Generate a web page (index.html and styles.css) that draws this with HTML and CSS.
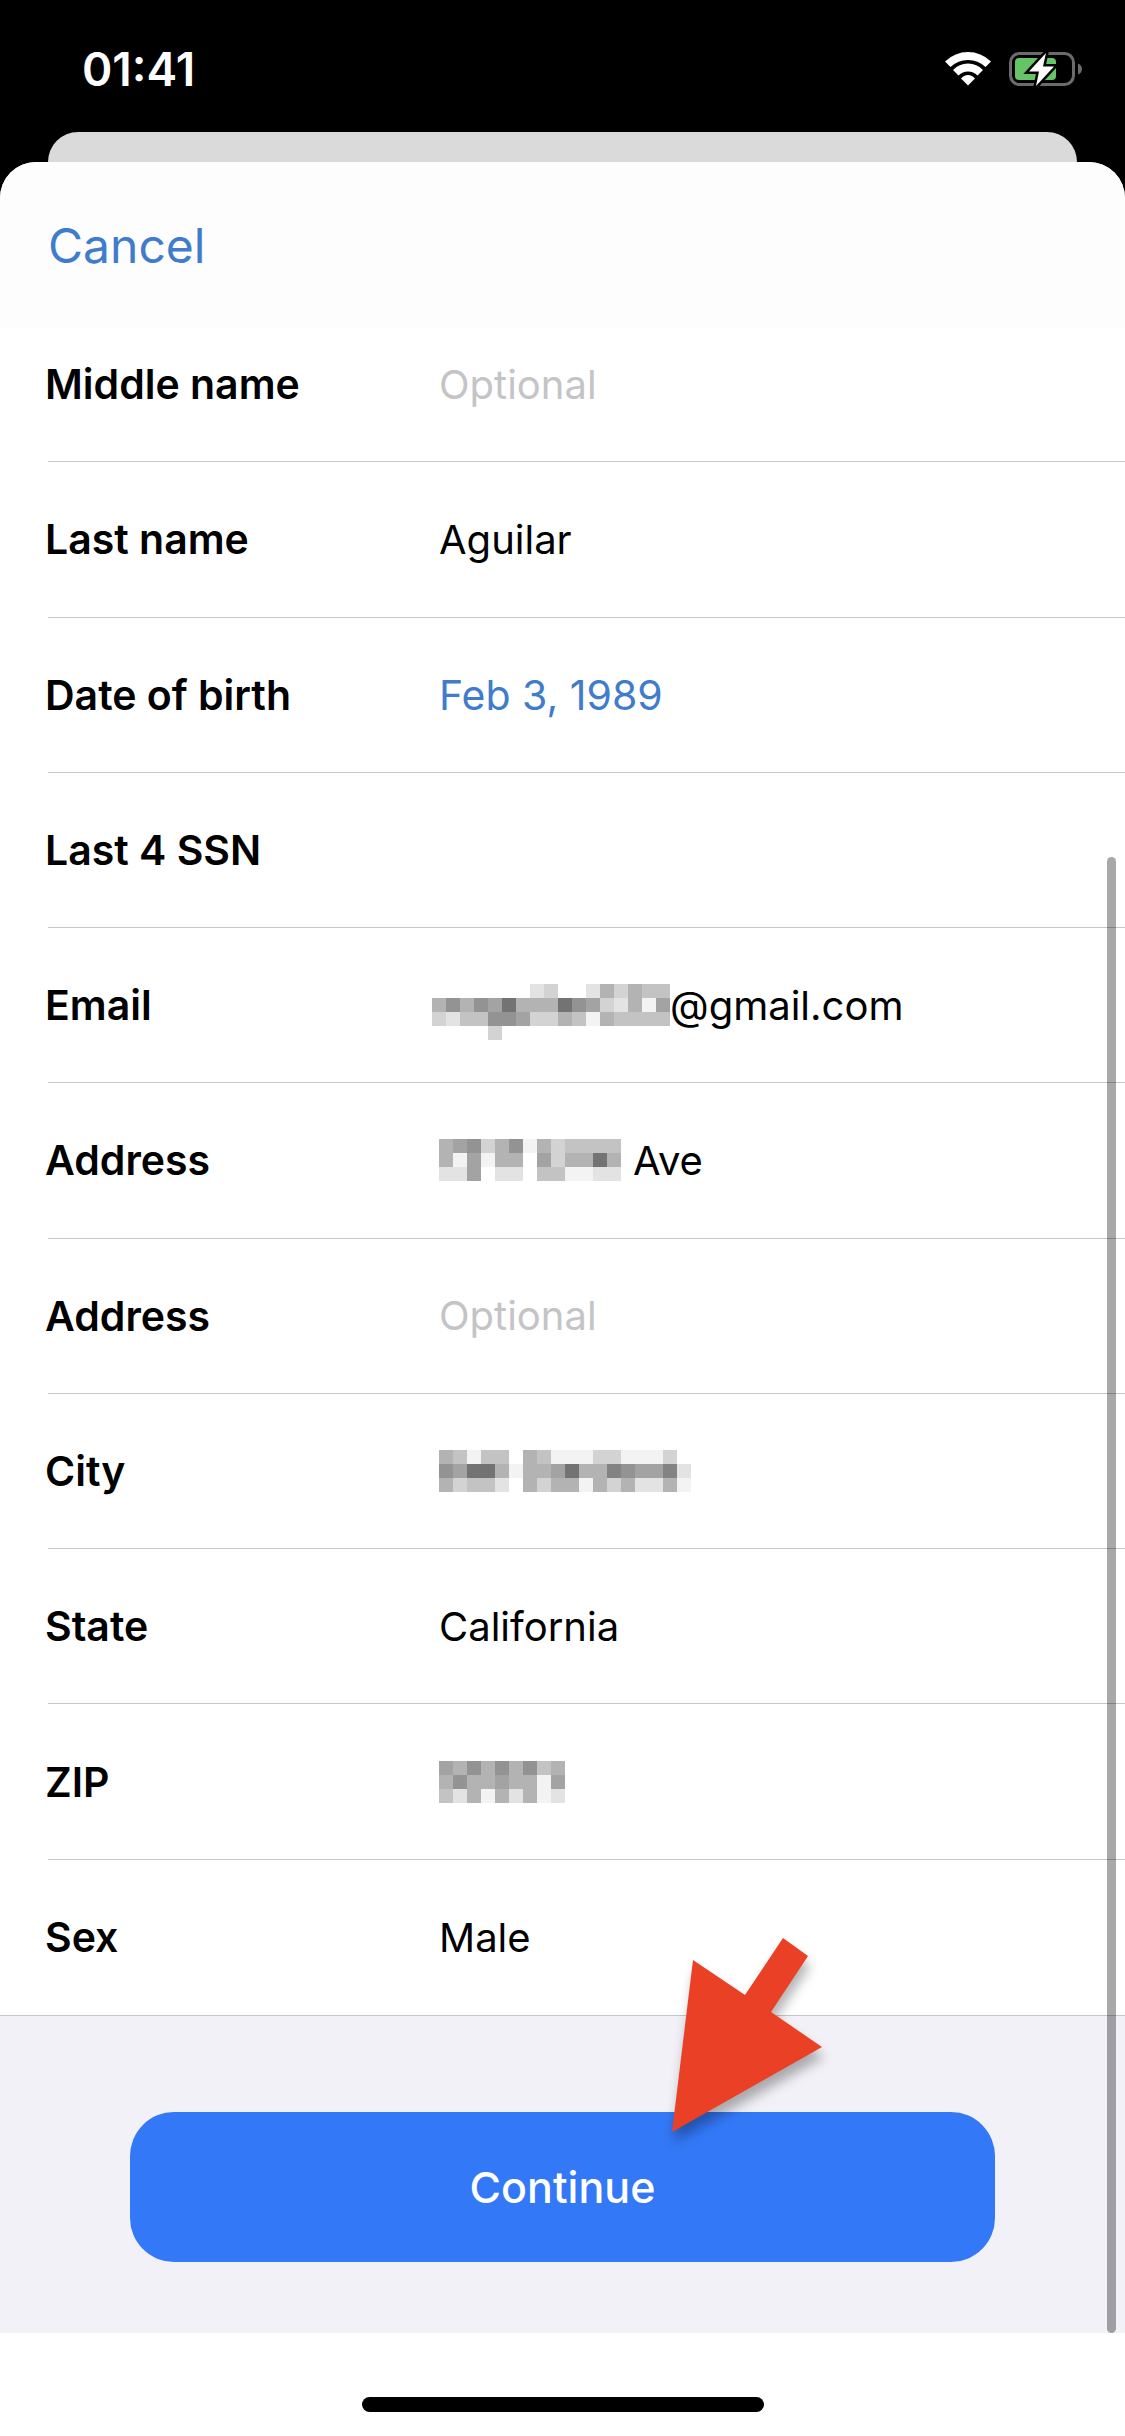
FILE: index.html
```
<!DOCTYPE html>
<html lang="en">
<head>
  <meta charset="UTF-8">
  <meta name="viewport" content="width=device-width, initial-scale=1.0">
  <title>Personal details</title>
  <link rel="stylesheet" href="styles.css">
</head>
<body>
  <div class="status-bar">
    <span class="time">01:41</span>
    <div class="status-icons">
      <svg width="46" height="34" viewBox="0 0 46 34">
        <path d="M0 9.500 Q10 0 23 0 T46 9.500 L40.500 15 Q33 8 23 8 T5.500 15 Z" fill="#fff"/>
        <path d="M8 18 Q14 11.500 23 11.500 T38 18 L32.500 23.500 Q28.500 19.500 23 19.500 T13.500 23.500 Z" fill="#fff"/>
        <path d="M16 26.500 Q19 23 23 23 T30 26.500 L23 33.500 Z" fill="#fff"/>
      </svg>
      <svg width="74" height="38" viewBox="0 0 74 38">
        <rect x="1.500" y="3.500" width="63" height="31" rx="9" fill="none" stroke="#6b6b6d" stroke-width="3"/>
        <path d="M69 13.500 Q73 15 73 19 T69 24.500 Z" fill="#6b6b6d"/>
        <rect x="6" y="8" width="41" height="22" rx="4" fill="#65c466"/>
        <path d="M37 3 L20 21.500 H30 L27 36 L45 16.500 H34 Z" fill="#fff" stroke="#000" stroke-width="5"/>
        <path d="M37 3 L20 21.500 H30 L27 36 L45 16.500 H34 Z" fill="#fff"/>
      </svg>
    </div>
  </div>

  <div class="back-card"></div>

  <main class="sheet">
    <header class="sheet-header">
      <button type="button" class="cancel">Cancel</button>
    </header>

    <form class="content">
      <div class="fields">
        <div class="row">
          <label for="middleName">Middle name</label>
          <div class="value"><input type="text" id="middleName" placeholder="Optional"></div>
        </div>
        <div class="row">
          <label for="lastName">Last name</label>
          <div class="value"><input type="text" id="lastName" value="Aguilar"></div>
        </div>
        <div class="row">
          <label for="birthDate">Date of birth</label>
          <div class="value"><button type="button" class="date" id="birthDate">Feb 3, 1989</button></div>
        </div>
        <div class="row">
          <label for="ssn">Last 4 SSN</label>
          <div class="value"><input type="text" id="ssn"></div>
        </div>
        <div class="row">
          <label for="email">Email</label>
          <div class="value email">
            <svg class="mosaic" data-cells=".......ed..ebdbcc b9b9a7bbb79adebfa decc99addbcfbcccc ....d............"></svg>
            <input type="text" id="email" value="@gmail.com">
          </div>
        </div>
        <div class="row">
          <label for="address1">Address</label>
          <div class="value street">
            <svg class="mosaic" data-cells="ba9db9fbdcccc bfafbb.adbb7b eea.ee.ccffee"></svg>
            <input type="text" id="address1" value="Ave">
          </div>
        </div>
        <div class="row">
          <label for="address2">Address</label>
          <div class="value"><input type="text" id="address2" placeholder="Optional"></div>
        </div>
        <div class="row">
          <label for="city">City</label>
          <div class="value">
            <svg class="mosaic" data-cells="bcfcc.bcfffddfffd. 9a77bfbba7bb89aa8e bdcce.bdbbfbdbeebf"></svg>
            <input type="text" id="city">
          </div>
        </div>
        <div class="row">
          <label for="state">State</label>
          <div class="value"><select id="state"><option>California</option></select></div>
        </div>
        <div class="row">
          <label for="zip">ZIP</label>
          <div class="value">
            <svg class="mosaic" data-cells="ab9b9b9cb b9bbabbfa cebfbebfe"></svg>
            <input type="text" id="zip">
          </div>
        </div>
        <div class="row">
          <label for="sex">Sex</label>
          <div class="value"><select id="sex"><option>Male</option></select></div>
        </div>
      </div>

      <div class="actions">
        <button type="button" class="continue">Continue</button>
        <svg class="arrow" width="170" height="220" viewBox="0 0 170 220">
          <path d="M119 8 L144 26 L107 82 L158 117 L8 202 L29 30 L81 65 Z" fill="#ea4025"/>
        </svg>
      </div>

      <div class="scrollbar"></div>
    </form>

    <div class="home-area"><div class="home-bar"></div></div>
  </main>

  <script>
    // hidden values: one grey level per 14px cell, a dot leaves the cell empty
    const size = 14;
    document.querySelectorAll('.mosaic').forEach(function (svg) {
      const rows = svg.dataset.cells.split(' ');
      svg.setAttribute('width', rows[0].length * size);
      svg.setAttribute('height', 3 * size);
      let cells = '';
      rows.forEach(function (row, y) {
        row.split('').forEach(function (c, x) {
          if (c === '.') return;
          const grey = parseInt(c, 16) * 16 + 3;
          cells += `<rect x="${x * size}" y="${y * size}" width="${size}" height="${size}" fill="rgb(${grey}, ${grey}, ${grey})"/>`;
        });
      });
      svg.innerHTML = cells;
    });
  </script>
</body>
</html>
```

FILE: styles.css
```
* {
  box-sizing: border-box;
}
body {
  margin: 0;
  min-height: 100vh;
  display: flex;
  flex-direction: column;
  background: #000;
  color: #000;
  font-family: Inter, "Liberation Sans", sans-serif;
  font-size: 40px;
}
button,
input,
select {
  margin: 0;
  padding: 0;
  border: none;
  background: none;
  color: inherit;
  font: inherit;
  appearance: none;
  outline: none;
}
.status-bar {
  height: 132px;
  padding: 6px 42px 0 82px;
  display: flex;
  align-items: center;
  justify-content: space-between;
}
.time {
  color: #fff;
  font-size: 46px;
  font-weight: 600;
}
.status-icons {
  display: flex;
  align-items: center;
  gap: 18px;
}
.back-card {
  height: 30px;
  margin: 0 48px;
  background: #dadadb;
  border-radius: 30px 30px 0 0;
}
.sheet {
  flex: 1;
  display: flex;
  flex-direction: column;
  background: #fff;
  border-radius: 36px 36px 0 0;
}
.sheet-header {
  height: 166px;
  margin-bottom: -21px;
  padding: 0 48px;
  display: flex;
  align-items: center;
  background: #fdfdfd;
  border-radius: 36px 36px 0 0;
}
.cancel {
  color: #3f7ccb;
  font-size: 48px;
}
.content {
  position: relative;
  flex: 1;
  display: flex;
  flex-direction: column;
}
.fields {
  flex: 1;
  display: grid;
  grid-auto-rows: 1fr;
  padding-left: 48px;
}
.row {
  display: grid;
  grid-template-columns: 391px minmax(0, 1fr);
  align-items: center;
  border-bottom: 1px solid #c6c6c8;
}
.row:last-child {
  border-bottom: none;
}
label {
  margin-left: -3px;
  font-size: 41px;
  font-weight: 600;
}
.value {
  display: flex;
  align-items: center;
  padding-right: 48px;
}
.value input,
.value select {
  flex: 1;
  min-width: 0;
}
.value input::placeholder {
  color: #c4c4c6;
  opacity: 1;
}
.value .date {
  color: #3f7ccb;
  font-size: 41px;
}
.mosaic {
  flex: none;
  overflow: visible;
}
.email {
  margin-left: -7px;
}
.street {
  gap: 12px;
}
.actions {
  position: relative;
  padding: 96px 130px 71px;
  background: #f1f1f7;
  border-top: 1px solid #c6c6c8;
}
.continue {
  width: 100%;
  height: 150px;
  background: #3378f6;
  border-radius: 44px;
  color: #fff;
  font-size: 43px;
  font-weight: 500;
}
.arrow {
  position: absolute;
  top: -86px;
  left: calc(50% + 101px);
  filter: drop-shadow(2px 10px 6px rgba(0, 0, 0, 0.3));
}
.scrollbar {
  position: absolute;
  top: 550px;
  right: 9px;
  bottom: 0;
  width: 9px;
  background: rgba(0, 0, 0, 0.34);
  border-radius: 5px;
}
.home-area {
  height: 103px;
  display: flex;
  align-items: flex-end;
  justify-content: center;
  padding-bottom: 24px;
}
.home-bar {
  width: 402px;
  height: 15px;
  background: #000;
  border-radius: 8px;
}
```
